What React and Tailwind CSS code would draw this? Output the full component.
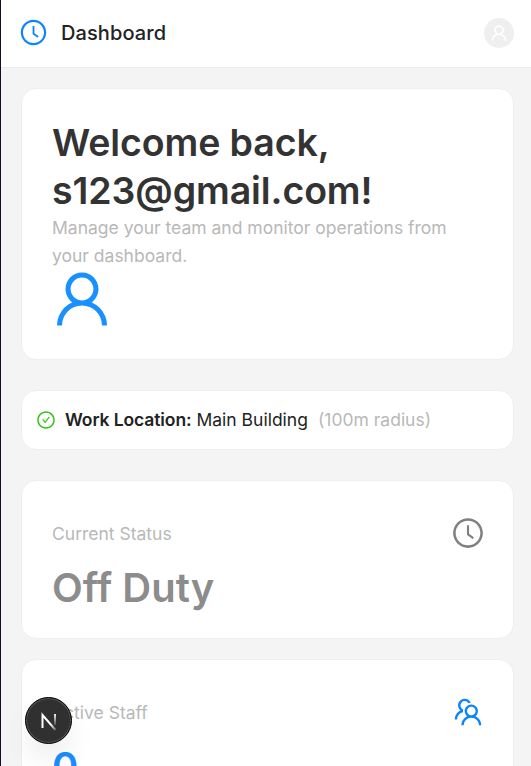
import { AiOutlineClockCircle, AiOutlineUser, AiOutlineTeam, AiOutlineCheckCircle } from "react-icons/ai";

function Header() {
  return (
    <header className="flex h-[68px] shrink-0 items-center justify-between border-b border-[#ebebeb] bg-white pr-[17px] pb-[2px] pl-[18px]">
      <div className="flex items-center gap-[14px]">
        <AiOutlineClockCircle className="size-[29px] text-[#0a84ff]" />
        <h1 className="-ml-px text-[20px] leading-7 font-medium tracking-[0.1px] text-[#222]">Dashboard</h1>
      </div>
      <div className="flex size-[30px] items-center justify-center rounded-full bg-[#efefef]">
        <AiOutlineUser className="size-[20px] text-white" />
      </div>
    </header>
  );
}

function Card({ className, children }) {
  return (
    <section className={`rounded-[15px] border border-[#eee] bg-white ${className}`}>{children}</section>
  );
}

function Stat({ label, value, icon, className, valueClass }) {
  return (
    <Card className={`px-[30px] pt-[36px] ${className}`}>
      <div className="flex h-8 items-center justify-between">
        <span className="pt-[2px] text-[17.5px] text-[#b8b8b8]">{label}</span>
        {icon}
      </div>
      <div className={`mt-[15px] text-[40px] leading-[48px] font-semibold ${valueClass}`}>{value}</div>
    </Card>
  );
}

export default function App() {
  return (
    <div className="relative flex h-screen flex-col overflow-hidden border-l border-[#1c0a20] bg-[#f4f4f4] font-['Inter',sans-serif]">
      <Header />
      <main className="flex flex-col pt-5 pr-[17px] pl-5">
        <Card className="h-[272px] shrink-0 px-[30px] pt-[30px]">
          <h2 className="text-[37.5px] leading-[48px] font-semibold tracking-[-0.1px] text-[#333]">
            Welcome back,
            <br />
            s123@gmail.com!
          </h2>
          <p className="-mt-px text-[17.5px] leading-[28px] text-[#b8b8b8]">
            Manage your team and monitor operations from your dashboard.
          </p>
          <AiOutlineUser className="-mt-[5px] -ml-[4px] size-[68px] text-[#1890ff]" />
        </Card>
        <Card className="mt-[30px] flex h-[60px] shrink-0 items-center px-[14px] text-[17.5px]">
          <AiOutlineCheckCircle className="size-[20px] text-[#34c314]" />
          <span className="ml-[9px] font-semibold tracking-[-0.1px] text-[#222]">Work Location:</span>
          <span className="ml-[5px] text-[#222]">Main Building</span>
          <span className="ml-[10px] text-[#b8b8b8]">(100m radius)</span>
        </Card>
        <Stat
          className="mt-[30px] h-[159px] shrink-0"
          label="Current Status"
          value="Off Duty"
          valueClass="text-[#8c8c8c]"
          icon={<AiOutlineClockCircle className="-mr-[2px] size-[34px] text-[#808080]" />}
        />
        <Stat
          className="mt-[20px] h-[159px] shrink-0"
          label="Active Staff"
          value="0"
          valueClass="text-[#1890ff]"
          icon={<AiOutlineTeam className="-mr-[2px] size-[34px] text-[#0a84ff]" />}
        />
      </main>
      <button
        aria-label="Next.js"
        className="absolute top-[697px] left-[24px] flex size-[47px] items-center justify-center rounded-full border border-black bg-[#303030] shadow-[inset_0_0_0_1px_#555,0_16px_32px_-8px_rgba(0,0,0,0.15)]"
      >
        <svg viewBox="0 0 18 20" className="h-5 w-[18px]" fill="none">
          <defs>
            <linearGradient id="stem" x1="0" y1="2" x2="0" y2="15" gradientUnits="userSpaceOnUse">
              <stop stopColor="#fff" />
              <stop offset="1" stopColor="#fff" stopOpacity="0.1" />
            </linearGradient>
            <linearGradient id="diagonal" x1="11" y1="13" x2="17" y2="20" gradientUnits="userSpaceOnUse">
              <stop stopColor="#fff" />
              <stop offset="1" stopColor="#fff" stopOpacity="0.1" />
            </linearGradient>
          </defs>
          <path d="M2.5 17V4L15.5 19" stroke="url(#diagonal)" strokeWidth="2" />
          <path d="M15 3V14" stroke="url(#stem)" strokeWidth="2" />
        </svg>
      </button>
    </div>
  );
}
